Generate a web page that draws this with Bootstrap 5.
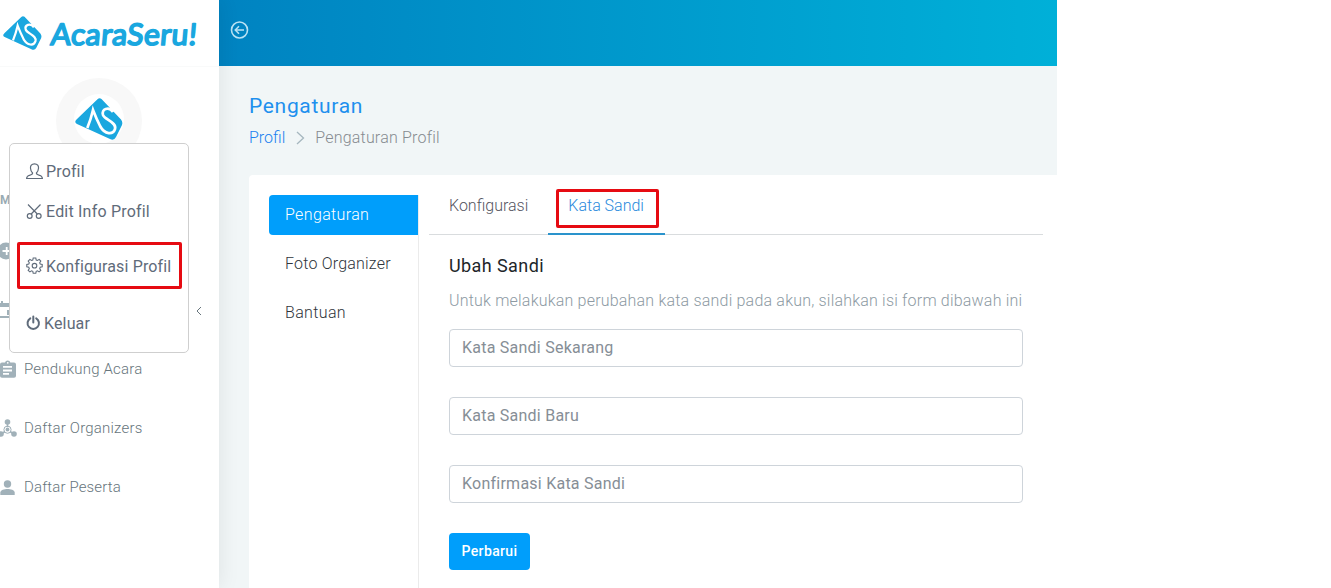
<!DOCTYPE html>
<html lang="id">
<head>
<meta charset="utf-8">
<meta name="viewport" content="width=device-width, initial-scale=1">
<title>Pengaturan Profil</title>
<link rel="stylesheet" href="https://cdn.jsdelivr.net/npm/bootstrap@5.3.0/dist/css/bootstrap.min.css">
<style>
  body { font-family: Roboto, "Open Sans", sans-serif; font-size: 16px; font-weight: 300; line-height: 24px; background: #fff; height: 588px; overflow: hidden; }
  .app-shell { width: 1057px; height: 588px; }
  .track-1 { letter-spacing: .14px; }
  .track-2 { letter-spacing: .2px; }
  .track-3 { letter-spacing: .36px; }
  .side { width: 219px; z-index: 2; box-shadow: 1px 0 20px rgba(0,0,0,.08); }
  .brand-bar { height: 67px; border-bottom: 1px solid #f9fafa; }
  .brand-bar svg { display: block; }
  .brand-name { font-family: Lato, sans-serif; font-weight: 400; }
  .avatar { width: 86px; height: 86px; margin: 11px 0 0 56px; padding-bottom: 4px; background: #f8f8f8; }
  .avatar span { width: 50px; height: 50px; }
  .menu-label { height: 24px; margin-top: 24px; font-size: 12px; font-weight: 700; letter-spacing: -.5px; color: #99abb4; }
  .side-nav { margin-top: 9px; }
  .side-item { height: 59px; gap: 8px; color: #67757c; font-size: 15px; text-decoration: none; }
  .side-item svg { color: #a1b1b9; }
  .side-item .chev { margin-right: 17px; position: relative; top: 1px; }
  .user-menu { left: 9px; top: 143px; width: 180px; height: 210px; padding: 7px; border: 1px solid #cfcfcf; border-radius: 5px; z-index: 3; }
  .user-menu a { color: #5f6b7a; font-weight: 400; text-decoration: none; height: 40px; padding: 0 9px; gap: 3px; }
  .user-menu a span { padding-top: 2px; }
  .user-menu .marked { height: 47px; margin: 11px 0; padding: 0 6px; width: 165px; }
  .user-menu .marked span { padding-top: 3px; }
  .user-menu .last { margin-top: 3px; }
  .marked { border: 3px solid #e60b12; border-radius: 2px; }
  .top-strip { height: 66px; padding: 21px 0 0 11px; background: linear-gradient(to right, #0083c1, #00b0d8); }
  .page-area { background: #f1f6f7; }
  .page-title { font-size: 21px; font-weight: 400; line-height: 28px; letter-spacing: .68px; color: #1e90ee; margin: 26px 0 6px 30px; }
  .crumbs { margin-left: 30px; height: 24px; color: #868b90; }
  .crumbs a { color: #2080f0; text-decoration: none; }
  .crumbs svg { margin: 0 10px 0 11px; }
  .panel { margin: 25px 0 0 30px; border-radius: 4px 0 0 0; padding: 20px 14px 0 20px; height: 413px; }
  .pills { width: 150px; border-right: 1px solid #ebebeb; margin-right: 10px; gap: 9px; }
  .pills a { height: 40px; line-height: 39px; padding-left: 16px; color: #2f353b; text-decoration: none; }
  .pills a.on { background: #009efb; color: #fff; border-radius: 4px 0 0 4px; }
  .tabs { height: 40px; border-bottom: 1px solid #d9dcde; color: #55555f; }
  .tabs > div { height: 40px; }
  .tab-one { padding: 0 20px; line-height: 21px; }
  .tab-two { width: 117px; border-bottom: 2px solid #2a93cc; padding-left: 8px; }
  .tab-two span { display: block; position: relative; top: -6px; width: 103px; height: 39px; line-height: 27px; padding-left: 9px; color: #2a89dc; }
  .pane { padding: 19px 20px 0; }
  .pane h4 { font-size: 18px; font-weight: 400; line-height: 24px; letter-spacing: .41px; color: #212529; margin: 0 0 11px; }
  .hint { color: #8d9aa3; margin: 0 0 16px; white-space: nowrap; }
  .pane .form-control { height: 38px; margin-bottom: 30px; border-color: #ced4da; border-radius: 4px; padding: 0 12px 2px; font-weight: 400; letter-spacing: .24px; }
  .form-control::placeholder { color: #868e96; }
  .btn-save { width: 81px; height: 37px; padding: 0; background: #009efb; color: #fff; border: 0; border-radius: 4px; font-size: 14px; font-weight: 500; }
  .btn-save:hover { background: #028ee1; color: #fff; }
</style>
</head>
<body>
<svg width="0" height="0" class="position-absolute">
  <symbol id="mark" viewBox="0 0 48 42">
    <path d="M2 21 22.500 1.200Q24.500-.6 26.500 1L46 21.500Q48 24 47 27L41 39Q39 43 35 41L2 26Q-1.500 24 2 21Z" fill="#1aa7df"/>
    <path d="M12.300 30Q16 21 18 12Q21 20 26 30M38 14C34 8 26 11 28 17C30 22 42 24 40 31C38 37 30 37 25 28" fill="none" stroke="#fff" stroke-width="2.700"/>
  </symbol>
</svg>
<div class="app-shell d-flex position-relative">
  <aside class="side bg-white position-relative flex-shrink-0">
    <div class="brand-bar">
      <svg width="219" height="66">
        <use href="#mark" x="3" y="15.500" width="39" height="35"/>
        <text class="brand-name" x="54" y="45.500" font-size="30" fill="#1aa7df" stroke="#1aa7df" stroke-width="1.700" stroke-linejoin="round" textLength="146" lengthAdjust="spacing" transform="skewX(-5)">AcaraSeru!</text>
      </svg>
    </div>
    <div class="avatar rounded-circle d-flex align-items-center justify-content-center">
      <span class="bg-white rounded-circle d-flex align-items-center justify-content-center"><svg width="48" height="42"><use href="#mark"/></svg></span>
    </div>
    <div class="menu-label">Menu</div>
    <nav class="side-nav">
      <a class="side-item d-flex align-items-center" href="#" aria-label="Tambah"><svg width="16" height="18" viewBox="0 0 16 18"><circle cx="6" cy="9" r="8.500" fill="currentColor"/><path d="M2.500 9h8.500M6.700 5v8" stroke="#fff" stroke-width="1.800"/></svg></a>
      <a class="side-item d-flex align-items-center" href="#" aria-label="Acara"><svg width="16" height="18" viewBox="0 0 16 18"><path d="M-2 3H14V16H-2M2 0V3M12 0V3" fill="none" stroke="currentColor" stroke-width="2"/><path d="M-2 3h16v3H-2zM7 9h5v5H7z" fill="currentColor"/></svg><svg class="chev ms-auto" width="6" height="10" viewBox="0 0 6 10"><path d="M5 1 1 5l4 4" fill="none" stroke="#67757c"/></svg></a>
      <a class="side-item d-flex align-items-center" href="#"><svg width="16" height="18" viewBox="0 0 16 18"><path fill="currentColor" fill-rule="evenodd" d="M2 2.500H5Q5.500.4 7.700.4T10.300 2.500H14Q16 2.500 16 4.500V16Q16 17.700 14 17.700H2Q0 17.700 0 16V4.500Q0 2.500 2 2.500ZM3 6V7.800H12V6ZM3 9.600V11.400H12V9.600ZM3 13V14.800H9V13ZM7.700 2a.8.800 0 1 0 .1 0Z"/></svg><span class="track-2">Pendukung Acara</span></a>
      <a class="side-item d-flex align-items-center" href="#"><svg class="overflow-visible" width="16" height="18" viewBox="0 0 16 18"><g fill="currentColor"><circle cx="7.500" cy="3" r="2.800"/><circle cx="1" cy="15" r="2.800"/><circle cx="14" cy="15" r="2.800"/><circle cx="7.500" cy="10.500" r="1.900"/></g><path d="M7.500 3v5M1 15l4-2.500M14 15l-4-2.500" stroke="currentColor" stroke-width="1.600"/><circle cx="7.500" cy="10.700" r="3.600" fill="none" stroke="currentColor" stroke-width="1"/></svg><span class="track-2">Daftar Organizers</span></a>
      <a class="side-item d-flex align-items-center" href="#"><svg width="16" height="18" viewBox="0 0 16 18"><circle cx="7.500" cy="6" r="3.700" fill="currentColor"/><path d="M.3 17V14.500C.3 12 4.500 11 7.500 11s7.200 1 7.200 3.500V17z" fill="currentColor"/></svg><span class="track-1">Daftar Peserta</span></a>
    </nav>
    <div class="user-menu position-absolute bg-white d-flex flex-column">
      <a class="d-flex align-items-center" href="#"><svg width="17" height="17" viewBox="0 0 17 17" fill="none" stroke="currentColor" stroke-width="1.200"><path d="M8.500.8C5.500.8 4.300 2.800 4.500 5.300C4.600 7.500 5.600 9 6.600 10C6.700 11.500 5.500 11.800 3.500 12.300C1.500 12.900.7 13.800.6 15.500H16.400C16.300 13.800 15.500 12.900 13.500 12.300C11.500 11.800 10.300 11.500 10.400 10C11.400 9 12.400 7.500 12.500 5.300C12.700 2.800 11.500.8 8.500.8Z"/></svg><span class="track-1">Profil</span></a>
      <a class="d-flex align-items-center" href="#"><svg width="17" height="17" viewBox="0 0 17 17" fill="none" stroke="currentColor" stroke-width="1.200"><path d="M2 1.500 11.300 11M14.500 1.500 5.200 11"/><circle cx="3.700" cy="13" r="2.400"/><circle cx="12.700" cy="13" r="2.400"/></svg><span class="track-2">Edit Info Profil</span></a>
      <a class="marked d-flex align-items-center" href="#"><svg width="17" height="17" viewBox="0 0 17 17" fill="none" stroke="currentColor" stroke-width="1.100"><path d="M7.200 1h2.600l.4 2 1.300.5 1.700-1.100 1.600 1.700-1.100 1.700.5 1.200 2 .4v2.500l-2 .4-.5 1.300 1.100 1.700-1.700 1.600-1.600-1.100-1.300.5-.4 2H7.200l-.4-2-1.300-.5-1.600 1.100-1.700-1.600 1.100-1.700-.5-1.300-2-.4V7.400l2-.4.5-1.200-1.100-1.700 1.700-1.700 1.600 1.100L6.800 3z"/><circle cx="8.500" cy="8.700" r="2.300"/></svg><span class="track-1">Konfigurasi Profil</span></a>
      <a class="last d-flex align-items-center" href="#"><svg width="15" height="16" viewBox="0 0 15 16" fill="none" stroke="currentColor" stroke-width="2" stroke-linecap="round"><path d="M4.300 3.300A5.700 5.700 0 1 0 10.200 3.300M7.300 1.500v6"/></svg><span class="track-1">Keluar</span></a>
    </div>
  </aside>
  <main class="page-area flex-grow-1">
    <div class="top-strip"><svg class="d-block" width="19" height="18" viewBox="0 0 19 18" fill="none" stroke="#b9e2f4" stroke-width="1.600"><circle cx="9.500" cy="9" r="8"/><path d="M14 9H5.500M9 5.300 5.300 9 9 12.700"/></svg></div>
    <h3 class="page-title">Pengaturan</h3>
    <div class="crumbs d-flex align-items-center">
      <a href="#">Profil</a>
      <svg width="9" height="14" viewBox="0 0 9 14"><path d="M1 1 7.500 7 1 13" fill="none" stroke="#a6b7bf" stroke-width="1.300"/></svg>
      <span class="track-2">Pengaturan Profil</span>
    </div>
    <section class="panel bg-white d-flex">
      <nav class="pills d-flex flex-column flex-shrink-0">
        <a class="on track-3" href="#">Pengaturan</a>
        <a class="track-2" href="#">Foto Organizer</a>
        <a class="track-3" href="#">Bantuan</a>
      </nav>
      <div class="flex-grow-1">
        <div class="tabs d-flex">
          <div class="tab-one">Konfigurasi</div>
          <div class="tab-two"><span class="marked">Kata Sandi</span></div>
        </div>
        <div class="pane">
          <h4>Ubah Sandi</h4>
          <p class="hint track-2">Untuk melakukan perubahan kata sandi pada akun, silahkan isi form dibawah ini</p>
          <input class="form-control" placeholder="Kata Sandi Sekarang">
          <input class="form-control" placeholder="Kata Sandi Baru">
          <input class="form-control" placeholder="Konfirmasi Kata Sandi">
          <button class="btn btn-save track-3">Perbarui</button>
        </div>
      </div>
    </section>
  </main>
</div>
<script src="https://cdn.jsdelivr.net/npm/bootstrap@5.3.0/dist/js/bootstrap.bundle.min.js"></script>
</body>
</html>
